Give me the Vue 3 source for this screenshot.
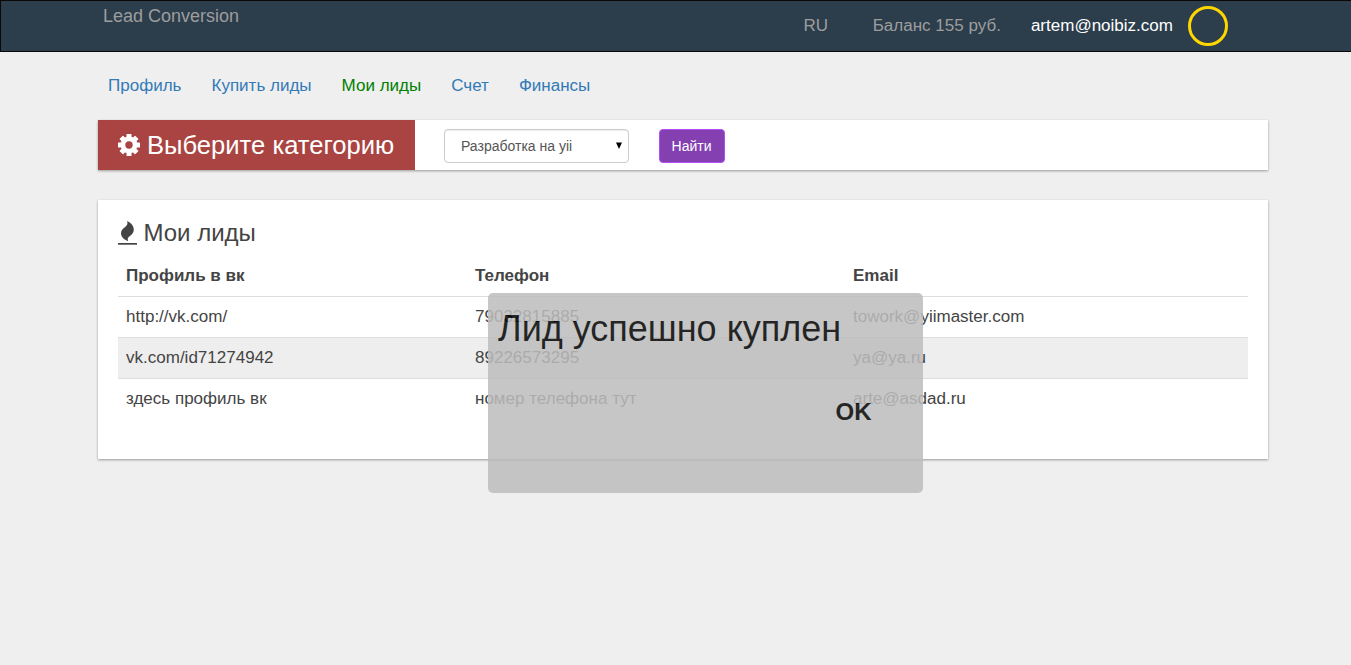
<template>
  <div class="page">
    <!-- Top bar -->
    <header class="navbar">
      <div class="container navbar-inner">
        <a class="brand" href="#">Lead Conversion</a>
        <div class="navbar-right">
          <a class="lang" href="#">RU</a>
          <a class="balance" href="#">Баланс {{ balance }} руб.</a>
          <a class="user" href="#">artem@noibiz.com</a>
          <span class="avatar"></span>
        </div>
      </div>
    </header>

    <main class="container">
      <nav class="menu">
        <a
          v-for="item in menu"
          :key="item"
          href="#"
          :class="{ active: item === activeItem }"
          @click.prevent="activeItem = item"
        >{{ item }}</a>
      </nav>

      <!-- Category filter -->
      <section class="panel filter">
        <div class="filter-title">
          <svg class="icon-cog" viewBox="-11 -11 22 22">
            <rect
              v-for="angle in [0, 45, 90, 135]"
              :key="angle"
              x="-2.500"
              y="-11"
              width="5"
              height="22"
              rx="0.6"
              :transform="`rotate(${angle})`"
            />
            <circle r="8.4" />
            <circle class="cog-hole" r="3.7" />
          </svg>
          <span>Выберите категорию</span>
        </div>
        <div class="select-wrap">
          <select v-model="category" class="select">
            <option>Разработка на yii</option>
          </select>
          <svg class="caret" viewBox="0 0 6 7"><path d="M0 0.500h6L3 7z" /></svg>
        </div>
        <button class="btn-find" type="button">Найти</button>
      </section>

      <!-- Leads -->
      <section class="panel leads">
        <h3>
          <svg class="icon-fire" viewBox="0 0 20 24">
            <path d="M9 0C13 1.800 15.800 4.800 15.800 8.600C15.800 12 13.800 13.600 11.600 15.300C9.700 16.800 9.300 18.200 10.200 20.200C6 18.600 3 15.800 3 12.200C3 9.300 4.800 7.700 7.200 5.900C9.500 4.200 10 2.300 9 0z" />
            <path d="M0 22h19v1.700H0z" />
          </svg>
          <span>Мои лиды</span>
        </h3>
        <table>
          <thead>
            <tr>
              <th class="col-profile">Профиль в вк</th>
              <th class="col-phone">Телефон</th>
              <th>Email</th>
            </tr>
          </thead>
          <tbody>
            <tr v-for="lead in leads" :key="lead.profile">
              <td>{{ lead.profile }}</td>
              <td>{{ lead.phone }}</td>
              <td>{{ lead.email }}</td>
            </tr>
          </tbody>
        </table>
      </section>
    </main>

    <div v-if="showMessage" class="message">
      <div class="message-text">Лид успешно куплен</div>
      <button class="message-ok" type="button" @click="showMessage = false">OK</button>
    </div>
  </div>
</template>

<script setup>
import { ref } from 'vue'

const balance = ref(155)
const menu = ['Профиль', 'Купить лиды', 'Мои лиды', 'Счет', 'Финансы']
const activeItem = ref('Мои лиды')
const category = ref('Разработка на yii')
const showMessage = ref(true)

const leads = ref([
  { profile: 'http://vk.com/', phone: '79032815885', email: 'towork@yiimaster.com' },
  { profile: 'vk.com/id71274942', phone: '89226573295', email: 'ya@ya.ru' },
  { profile: 'здесь профиль вк', phone: 'номер телефона тут', email: 'arte@asdad.ru' }
])
</script>

<style>
html,
body {
  background: #efefef;
}

body {
  margin: 0;
}
</style>

<style scoped>
* {
  box-sizing: border-box;
}

.page {
  min-height: 665px;
  font-family: 'Liberation Sans', Arial, sans-serif;
  font-size: 17.03px;
  line-height: 24px;
  color: #444;
}

a {
  text-decoration: none;
}

.container {
  width: 1170px;
  margin-left: 98px;
}

/* Top bar */
.navbar {
  height: 52px;
  background: #2c3d4c;
  border: 1px solid #080808;
  border-right: none;
}

.navbar-inner {
  display: flex;
  justify-content: space-between;
  height: 50px;
  margin-left: 97px;
}

.brand {
  padding: 5px 5px 0;
  font-size: 18px;
  line-height: 20px;
  color: #9d9d9d;
}

.navbar-right {
  display: flex;
  align-items: center;
  margin-right: 40px;
}

.lang,
.balance {
  color: #9d9d9d;
}

.lang {
  margin-right: 44.6px;
}

.balance {
  margin-right: 30px;
}

.user {
  margin-right: 15px;
  color: #fff;
}

.avatar {
  width: 40px;
  height: 40px;
  border: 3px solid #ffd700;
  border-radius: 50%;
}

/* Menu */
.menu {
  display: flex;
  gap: 30px;
  padding: 22px 10px;
  height: 68px;
}

.menu a {
  color: #337ab7;
}

.menu a.active {
  color: green;
}

/* Panels */
.panel {
  background: #fff;
  box-shadow: 0 1px 3px rgba(0, 0, 0, 0.14), 0 1px 2px rgba(0, 0, 0, 0.24);
}

.filter {
  display: flex;
  align-items: center;
  height: 50px;
  margin-bottom: 30px;
}

.filter-title {
  display: flex;
  align-items: center;
  width: 317px;
  height: 50px;
  padding-left: 20px;
  background: #a94442;
  color: #fff;
  font-size: 25.6px;
  line-height: 50px;
}

.icon-cog {
  width: 22px;
  height: 22px;
  margin-right: 7px;
  fill: #fff;
}

.cog-hole {
  fill: #a94442;
}

.select-wrap {
  position: relative;
  width: 185px;
  margin: 2px 30px 0 29px;
}

.select {
  display: block;
  width: 100%;
  height: 34px;
  padding: 0 16px;
  border: 1px solid #ccc;
  border-radius: 4px;
  background: #fff;
  box-shadow: inset 0 1px 1px rgba(0, 0, 0, 0.075);
  color: #555;
  font-family: inherit;
  font-size: 14px;
  appearance: none;
}

.caret {
  position: absolute;
  top: 13px;
  right: 7px;
  width: 6px;
  height: 7px;
  fill: #000;
  pointer-events: none;
}

.btn-find {
  width: 66px;
  height: 34px;
  margin-top: 2px;
  padding: 0 1px 0 0;
  border: 1px solid #b24cf5;
  border-radius: 4px;
  background: #843fb1;
  color: #fff;
  font-family: inherit;
  font-size: 14px;
  cursor: pointer;
}

/* Leads table */
.leads {
  height: 259px;
  padding: 20px;
}

h3 {
  display: flex;
  align-items: center;
  height: 26px;
  margin: 0 0 9px;
  font-size: 24px;
  font-weight: normal;
  line-height: 26px;
}

.icon-fire {
  width: 20px;
  height: 24px;
  margin-right: 5.5px;
  fill: #444;
}

table {
  width: 100%;
  border-collapse: separate;
  border-spacing: 0;
  table-layout: fixed;
}

th,
td {
  padding: 8px;
  text-align: left;
}

th {
  height: 41px;
}

td {
  border-top: 1px solid #ddd;
}

.col-profile {
  width: 349px;
}

.col-phone {
  width: 378px;
}

tbody tr:nth-child(even) {
  background: #eee;
}

/* Message over the page */
.message {
  position: absolute;
  top: 293px;
  left: 488px;
  width: 435px;
  height: 200px;
  padding: 11px 10px 10px;
  border-radius: 5px;
  background: #bdbdbd;
  color: #000;
  opacity: 0.85;
}

.message-text {
  font-size: 36px;
  line-height: 50px;
}

.message-ok {
  display: block;
  margin: 44px 41.5px 0 auto;
  padding: 0;
  border: none;
  background: none;
  color: #000;
  font-family: inherit;
  font-size: 24px;
  font-weight: bold;
  line-height: 28px;
  cursor: pointer;
}
</style>
